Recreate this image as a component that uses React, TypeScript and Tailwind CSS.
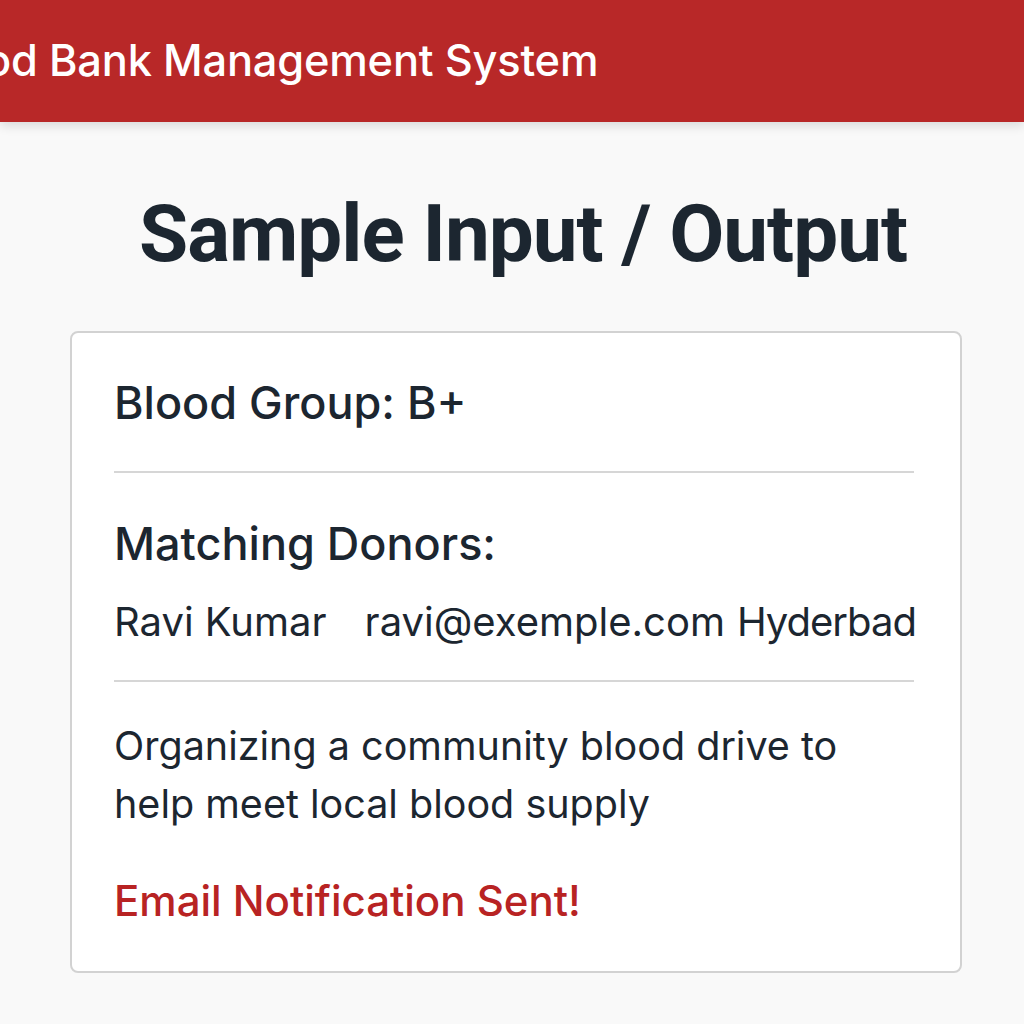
export default function App() {
  return (
    <div className="min-h-screen w-full bg-[#f9f9f9] font-['Inter',sans-serif] text-[#1c2630] overflow-hidden">
      {/* Header */}
      <header className="h-[122px] w-full bg-[#b82828] shadow-[0_4px_10px_rgba(0,0,0,0.12)] flex items-center overflow-hidden">
        <h1 className="ml-[-80px] whitespace-nowrap text-[43.4px] font-medium text-white tracking-[-0.2px]">
          Blood Bank Management System
        </h1>
      </header>

      {/* Title */}
      <h2 className="mt-[72px] text-center font-['Roboto',sans-serif] text-[80px] font-bold leading-none tracking-[-1px] pl-[22px]">
        Sample Input / Output
      </h2>

      {/* Card */}
      <div className="mx-[70px] mt-[57px] w-[892px] h-[642px] rounded-lg border-2 border-[#d2d2d2] bg-white pl-[42px] pr-[46px] pt-[47px]">
        <div className="text-[45px] font-medium leading-none">Blood Group: B+</div>
        <div className="mt-[46px] h-[2px] bg-[#d6d6d6]" />

        <div className="mt-[48px] text-[45px] font-medium leading-none">Matching Donors:</div>
        <div className="mt-[36px] flex whitespace-nowrap text-[40px] leading-none">
          <span>Ravi Kumar</span>
          <span className="ml-[38px]">ravi@exemple.com</span>
          <span className="ml-[12px] tracking-[-1px]">Hyderbad</span>
        </div>
        <div className="mt-[38px] h-[2px] bg-[#d6d6d6]" />

        <p className="mt-[35px] text-[39.5px] leading-[58px]">
          Organizing a community blood drive to
          <br />
          help meet local blood supply
        </p>
        <p className="mt-[47px] text-[42px] font-medium leading-none text-[#b82323]">Email Notification Sent!</p>
      </div>
    </div>
  );
}
